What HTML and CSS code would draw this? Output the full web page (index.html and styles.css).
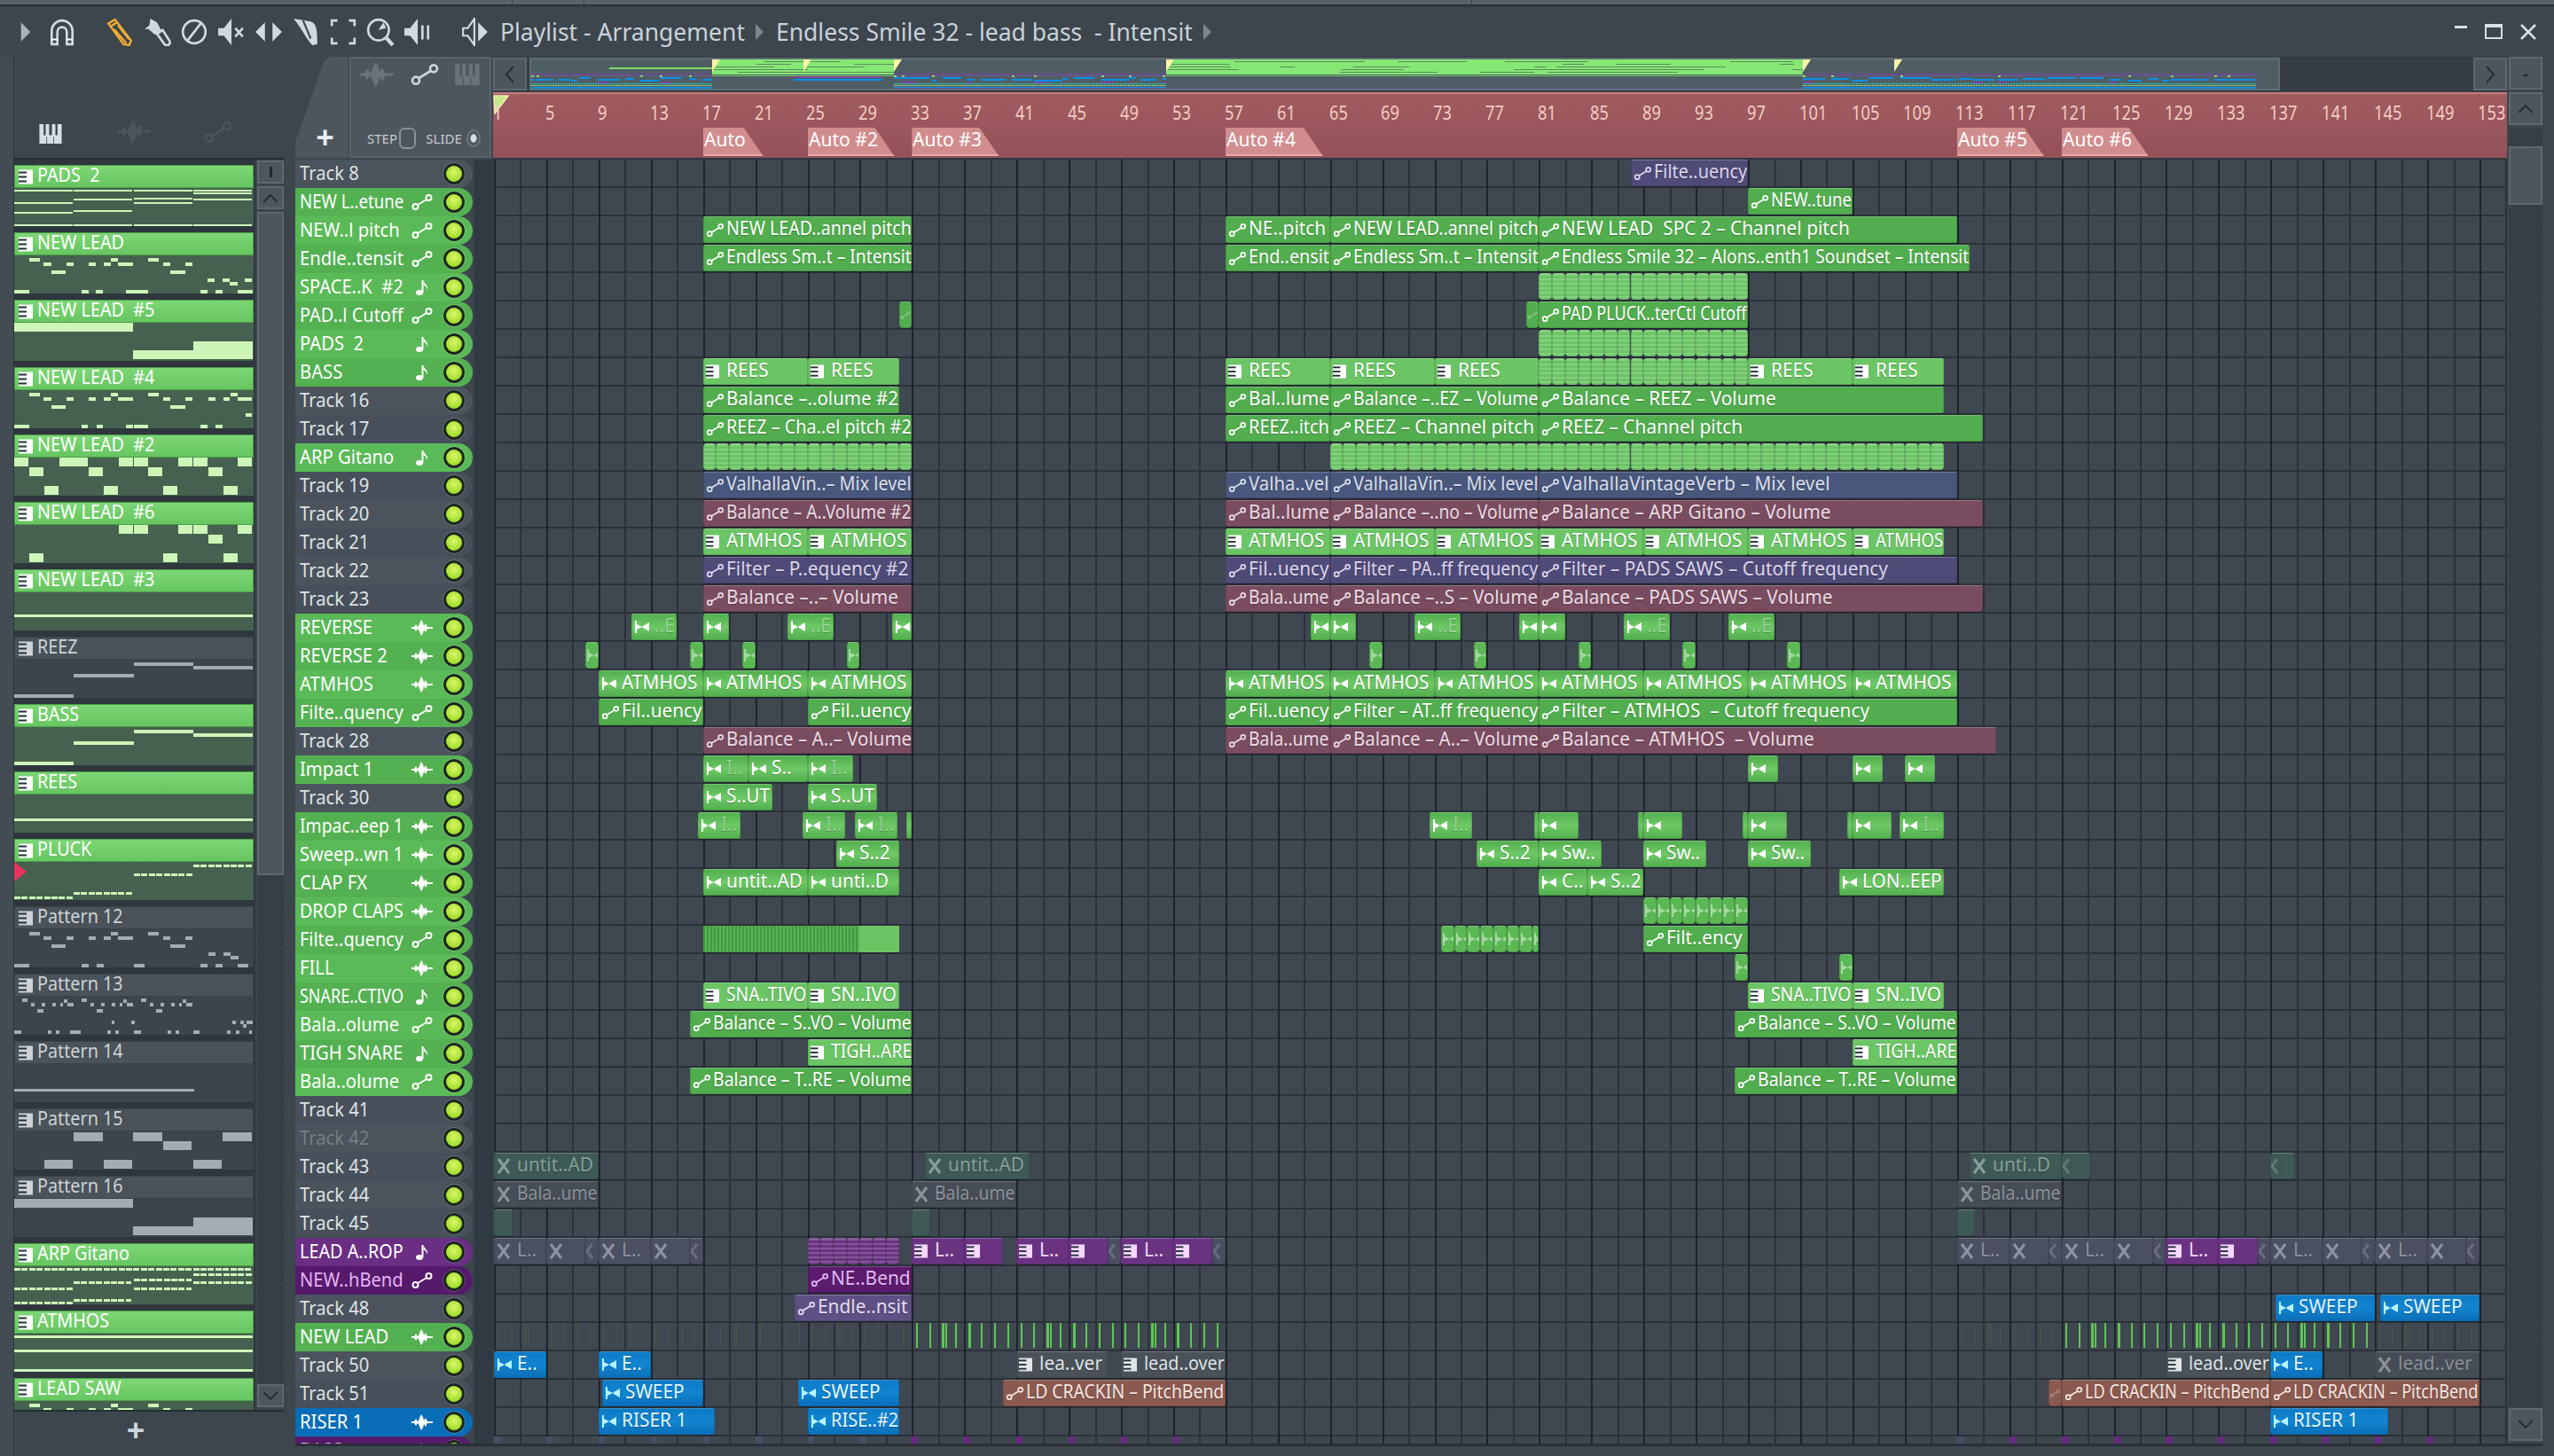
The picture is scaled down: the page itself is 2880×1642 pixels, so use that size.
FILE: index.html
```html
<!DOCTYPE html>
<html lang="en">
<head>
  <meta charset="UTF-8">
  <title>Playlist - Arrangement</title>
  <link rel="stylesheet" href="styles.css">
</head>
<body>
  <svg class="sprite" aria-hidden="true">
    <symbol id="i-auto" viewBox="0 0 24 18">
      <circle cx="4.5" cy="14" r="3" fill="none" stroke="currentColor" stroke-width="2"/>
      <circle cx="19.5" cy="4" r="3" fill="none" stroke="currentColor" stroke-width="2"/>
      <path d="M7 12 L17 6" stroke="currentColor" stroke-width="2"/>
    </symbol>
    <symbol id="i-note" viewBox="0 0 16 18">
      <ellipse cx="5" cy="15" rx="4" ry="3" fill="currentColor"/>
      <rect x="7.5" y="1" width="2" height="14" fill="currentColor"/>
      <path d="M9.5 1 C10 5 15 6 14 12 C13 8 11 7 9.5 6 Z" fill="currentColor"/>
    </symbol>
    <symbol id="i-wave" viewBox="0 0 24 18">
      <path d="M0 8 L3 8 L5 5 L7 8 L8 7 L10 2 L11 0 L13 3 L14 7 L16 4 L18 8 L24 8 L24 10 L18 10 L16 14 L14 11 L13 15 L11 18 L10 16 L8 11 L7 10 L5 13 L3 10 L0 10 Z" fill="currentColor"/>
    </symbol>
    <symbol id="i-pat" viewBox="0 0 16 16">
      <rect width="16" height="16" fill="currentColor"/>
      <rect x="0" y="2" width="9" height="2" fill="#26303a"/>
      <rect x="0" y="7" width="9" height="2" fill="#26303a"/>
      <rect x="0" y="12" width="9" height="2" fill="#26303a"/>
    </symbol>
    <symbol id="i-clip" viewBox="0 0 18 16">
      <path d="M1 1 L3 1 L3 5 L9 8 L3 11 L3 15 L1 15 Z M17 3 L17 13 L10 9 L9 8 L10 7 Z" fill="currentColor"/>
    </symbol>
    <symbol id="i-x" viewBox="0 0 16 18">
      <path d="M2 1 L14 17 M14 1 L2 17" fill="none" stroke="currentColor" stroke-width="3"/>
    </symbol>
    <symbol id="i-piano" viewBox="0 0 32 28">
      <path d="M0 0 H32 V28 H0 Z M6 0 V16 H9 V0 Z M14 0 V16 H18 V0 Z M23 0 V16 H26 V0 Z" fill="currentColor" fill-rule="evenodd"/>
      <path d="M10.500 18 V28 M20.500 18 V28" stroke="#3c444c" stroke-width="1"/>
    </symbol>
  </svg>

  <div class="topstrip"><span class="seam seam-a"></span><span class="seam seam-b"></span><span class="seam seam-c"></span></div>

  <header class="toolbar">
    <svg class="tool tool-arrow" viewBox="0 0 30 30"><path d="M10 5 L20 15 L10 25 Z" fill="#aab2b8"/></svg>
    <svg class="tool tool-wide" viewBox="0 0 30 30"><path d="M4 28 V14 A11 11 0 0 1 26 14 V28 H20 V15 A5 5 0 0 0 10 15 V28 Z" fill="none" stroke="#d2d9de" stroke-width="2.500"/><path d="M4 23 H10 M20 23 H26" stroke="#fff" stroke-width="2"/></svg>
    <svg class="tool" viewBox="0 0 30 30"><path d="M3 6 L10 2 L27 24 L25 29 L19 28 Z M6 9 L12 5 M9 12 L22 27 M13 8 L25 23" fill="none" stroke="#f0ab33" stroke-width="2.200"/></svg>
    <svg class="tool" viewBox="0 0 30 30"><path d="M8 1 L15 5 L20 14 L13 18 L6 12 L2 12 L7 8 Z" fill="#d2d9de"/><path d="M15 17 L21 13 L28 24 A3 3 0 0 1 23 28 Z" fill="none" stroke="#d2d9de" stroke-width="2.500"/></svg>
    <svg class="tool" viewBox="0 0 30 30"><circle cx="15" cy="15" r="12" fill="none" stroke="#d2d9de" stroke-width="2.500"/><path d="M8 24 L22 6" stroke="#d2d9de" stroke-width="2.500"/></svg>
    <svg class="tool" viewBox="0 0 30 30"><path d="M1 11 H7 L15 1 V29 L7 19 H1 Z" fill="#d2d9de"/><path d="M19 11 L27 20 M27 11 L19 20" stroke="#d2d9de" stroke-width="2.500"/></svg>
    <svg class="tool" viewBox="0 0 30 30"><path d="M11 5 V25 L1 15 Z M19 5 V25 L29 15 Z" fill="#d2d9de"/><path d="M15 3 V27" stroke="#3c444c" stroke-width="2"/></svg>
    <svg class="tool" viewBox="0 0 30 30"><path d="M2 1 L20 4 C27 6 27 16 27 28 L22 29 C16 24 13 15 2 1 Z" fill="#d2d9de"/><path d="M12 3 L20 22" stroke="#3c444c" stroke-width="2"/></svg>
    <svg class="tool" viewBox="0 0 30 30"><path d="M3 9 V3 H9 M21 3 H27 V9 M27 21 V27 H21 M9 27 H3 V21" fill="none" stroke="#d2d9de" stroke-width="2.500"/></svg>
    <svg class="tool" viewBox="0 0 30 30"><circle cx="13" cy="13" r="11" fill="none" stroke="#d2d9de" stroke-width="2.500"/><path d="M13 13 L18 5 L21 11 Z" fill="#d2d9de"/><path d="M21 21 L28 29" stroke="#d2d9de" stroke-width="4"/></svg>
    <svg class="tool tool-wide" viewBox="0 0 30 30"><path d="M1 11 H7 L15 1 V29 L7 19 H1 Z" fill="#d2d9de"/><path d="M20 8 V23 M26 8 V23" stroke="#d2d9de" stroke-width="2.500"/></svg>
    <svg class="tool" viewBox="0 0 30 30"><path d="M2 11 H7 L14 1 V29 L7 19 H2 Z" fill="none" stroke="#d2d9de" stroke-width="2"/><path d="M18 5 V25 L28 15 Z" fill="#d2d9de"/></svg>
    <div class="title">
      <span>Playlist - Arrangement</span><i class="crumb"></i><span>Endless Smile 32 - lead bass&nbsp; - Intensit</span><i class="crumb"></i>
    </div>
    <div class="winbtns">
      <span class="win-min"></span>
      <span class="win-max"></span>
      <svg class="win-close" viewBox="0 0 18 18"><path d="M1 1 L17 17 M17 1 L1 17" stroke="#d8dfe4" stroke-width="2.500"/></svg>
    </div>
  </header>

  <main class="main">
    <div class="edge"></div>

    <section class="picker">
      <div class="picker-tabs">
        <svg class="tab-piano"><use href="#i-piano"/></svg>
        <svg class="tab-wave"><use href="#i-wave"/></svg>
        <svg class="tab-auto"><use href="#i-auto"/></svg>
      </div>
      <div class="picker-body">
        <div class="clip-list" id="clipList"></div>
        <div class="vscroll vscroll-small">
          <div class="sb-btn sb-grip"><i></i></div>
          <div class="sb-btn"><svg viewBox="0 0 16 10"><path d="M1 9 L8 2 L15 9" fill="none" stroke="#20272e" stroke-width="1.500"/></svg></div>
          <div class="sb-thumb sb-thumb-long"></div>
          <div class="sb-track"></div>
          <div class="sb-btn"><svg viewBox="0 0 16 10"><path d="M1 1 L8 8 L15 1" fill="none" stroke="#20272e" stroke-width="1.500"/></svg></div>
        </div>
      </div>
      <div class="picker-add">+</div>
    </section>

    <section class="arrange">
      <div class="arr-left">
        <div class="arr-tabs">
          <div class="tab-plus">+</div>
          <div class="tab-panel">
            <div class="panel-icons">
              <svg class="pi-wave"><use href="#i-wave"/></svg>
              <svg class="pi-auto"><use href="#i-auto"/></svg>
              <svg class="pi-piano"><use href="#i-piano"/></svg>
            </div>
            <div class="panel-mode">
              <span>STEP</span><i class="mode-step"></i><span class="mode-slide">SLIDE</span><i class="mode-radio"></i>
            </div>
          </div>
        </div>
        <div class="track-col" id="tracks"></div>
      </div>

      <div class="arr-mid">
        <div class="overview-row">
          <div class="nav-btn"><svg viewBox="0 0 12 20"><path d="M10 1 L2 10 L10 19" fill="none" stroke="#1f262d" stroke-width="1.800"/></svg></div>
          <div class="overview" id="overview"></div>
          <div class="overview-rest"></div>
          <div class="nav-btn"><svg viewBox="0 0 12 20"><path d="M2 1 L10 10 L2 19" fill="none" stroke="#1f262d" stroke-width="1.800"/></svg></div>
        </div>
        <div class="ruler" id="ruler">
          <svg class="playhead" viewBox="0 0 18 22"><path d="M1 1 H17 L2 21 Z" fill="#c8e98c" stroke="#f2eeb0" stroke-width="1.500"/></svg>
        </div>
        <div class="lanes" id="lanes"></div>
      </div>

      <div class="vscroll vscroll-main">
        <div class="sb-btn sb-mini">-</div>
        <div class="sb-btn"><svg viewBox="0 0 16 10"><path d="M1 9 L8 2 L15 9" fill="none" stroke="#20272e" stroke-width="1.500"/></svg></div>
        <div class="sb-track sb-track-short"></div>
        <div class="sb-thumb"></div>
        <div class="sb-track"></div>
        <div class="sb-btn"><svg viewBox="0 0 16 10"><path d="M1 1 L8 8 L15 1" fill="none" stroke="#20272e" stroke-width="1.500"/></svg></div>
      </div>
    </section>
  </main>

  <script src="script.js"></script>
</body>
</html>
```

FILE: styles.css
```css
html, body {
  margin: 0;
  padding: 0;
}
body {
  width: 2880px;
  height: 1642px;
  overflow: hidden;
  background: #3d454d;
  font-family: "Noto Sans", "Open Sans", sans-serif;
  font-size: 21.5px;
  color: #fff;
}
.sprite {
  width: 0;
  height: 0;
  position: absolute;
}
/* the app font is a tall narrow one, closest we get is Noto squeezed */
.squeeze {
  display: inline-block;
  transform: scaleX(0.92);
  transform-origin: left center;
}

/* top */
.topstrip {
  height: 5px;
  background: #5a626a;
  border-bottom: 2px solid #2a3037;
  display: flex;
}
.seam {
  width: 1px;
  background: #3a4149;
}
.seam-a { margin-left: 577px; }
.seam-b { margin-left: 80px; }
.seam-c { margin-left: 1000px; }

.toolbar {
  height: 57px;
  display: flex;
  align-items: center;
  padding-left: 13px;
  box-sizing: border-box;
}
.tool {
  width: 32px;
  height: 32px;
  margin-right: 10px;
  flex: none;
}
.tool-arrow { margin-right: 9px; }
.tool-wide { margin-right: 33px; }
.title {
  display: flex;
  align-items: center;
  font-size: 26.5px;
  color: #c9d3da;
  margin-left: 2px;
}
.crumb {
  width: 0;
  height: 0;
  margin: 0 14px 0 12px;
  border-left: 9px solid #7d868d;
  border-top: 9px solid transparent;
  border-bottom: 9px solid transparent;
}
.winbtns {
  margin-left: auto;
  display: flex;
  align-items: center;
  gap: 20px;
  padding-right: 20px;
}
.win-min {
  width: 14px;
  height: 3px;
  background: #d8dfe4;
  margin-bottom: 10px;
}
.win-max {
  width: 16px;
  height: 11px;
  border: 2px solid #d8dfe4;
  border-top-width: 4px;
}
.win-close {
  width: 18px;
  height: 18px;
}

.main {
  display: flex;
  height: 1578px;
}
.edge {
  width: 15px;
  border-right: 1px solid #2f363d;
  background: #434b53;
}

/* picker */
.picker {
  width: 304px;
  display: flex;
  flex-direction: column;
}
.picker-tabs {
  height: 114px;
  display: flex;
  align-items: flex-end;
  padding-bottom: 16px;
  box-sizing: border-box;
  color: #d8dfe4;
}
.tab-piano {
  width: 32px;
  height: 22px;
  margin-left: 25px;
}
.tab-wave {
  width: 42px;
  height: 28px;
  margin-left: 57px;
  color: #4c545c;
}
.tab-auto {
  width: 32px;
  height: 26px;
  margin-left: 58px;
  color: #4c545c;
}
.picker-body {
  height: 1410px;
  display: flex;
  border-top: 2px solid #262c32;
  border-bottom: 2px solid #262c32;
  box-sizing: content-box;
}
.clip-list {
  width: 274px;
  background: #2f363d;
  overflow: hidden;
  padding-top: 6px;
  box-sizing: border-box;
}
.pick {
  height: 76px;
  width: 270px;
}
.pick-head {
  height: 26px;
  display: flex;
  align-items: center;
  gap: 5px;
  padding-left: 4px;
  box-sizing: border-box;
  background: linear-gradient(#7dd676, #66c660);
  border: 1px solid #4c9e48;
  color: #fff;
  line-height: 24px;
}
.pick-head svg {
  width: 16px;
  height: 17px;
  flex: none;
}
.pick-name {
  position: relative;
  top: -2px;
}
.pick-body {
  position: relative;
  height: 43px;
  background: #46614f;
}
.pick-off .pick-head {
  background: #4a525a;
  border-color: #3a4149;
  color: #ccd2d6;
}
.pick-off .pick-body {
  background: #3c444c;
}
.note {
  position: absolute;
  background: #cdf5b8;
}
.pick-off .note {
  background: #a3acb2;
}
.pick-marker {
  position: absolute;
  left: 0;
  top: 0;
  width: 0;
  height: 0;
  border-left: 14px solid #e8355c;
  border-top: 11px solid transparent;
  border-bottom: 11px solid transparent;
}

.vscroll {
  display: flex;
  flex-direction: column;
}
.vscroll-small {
  width: 30px;
  margin-left: 2px;
  padding-top: 1px;
  box-sizing: border-box;
}
.vscroll-main {
  width: 38px;
  margin-left: 2px;
  height: 1564px;
}
.sb-btn {
  height: 37px;
  flex: none;
  background: #4d555d;
  border: 2px solid #5f676f;
  box-sizing: border-box;
  display: flex;
  align-items: center;
  justify-content: center;
  margin-bottom: 3px;
  color: #20272e;
  font-size: 18px;
  font-weight: 700;
}
.sb-btn svg {
  width: 18px;
  height: 11px;
}
.vscroll-small .sb-btn {
  height: 26px;
  margin-bottom: 3px;
}
.sb-grip i {
  width: 3px;
  height: 12px;
  background: #20272e;
}
.sb-thumb {
  height: 66px;
  flex: none;
  background: #4d555d;
  border: 2px solid #5f676f;
  box-sizing: border-box;
}
.sb-thumb-long {
  height: 748px;
}
.sb-track {
  flex: 1;
  background: repeating-linear-gradient(45deg, #343b42 0 2px, #3a4149 2px 4px);
}
.sb-track-short {
  flex: none;
  height: 21px;
}
.picker-add {
  height: 50px;
  line-height: 42px;
  text-align: center;
  font-size: 36px;
  font-weight: 700;
  color: #cfd6db;
  padding-right: 30px;
}

/* arrange */
.arrange {
  display: flex;
  margin-left: 13px;
  height: 1564px;
  border-bottom: 3px solid #2a3037;
  box-sizing: content-box;
}
.arr-left {
  width: 223px;
  flex: none;
}
.arr-tabs {
  height: 116px;
  display: flex;
  box-sizing: border-box;
  padding-bottom: 2px;
  gap: 1px;
  background: #3d454d;
}
.tab-plus {
  width: 60px;
  clip-path: polygon(38px 0, 100% 0, 100% 100%, 0 100%, 0 96px, 32px 6px);
  background: #4d555d;
  display: flex;
  align-items: flex-end;
  justify-content: center;
  font-size: 36px;
  font-weight: 700;
  line-height: 46px;
  color: #e8edf0;
  padding-left: 7px;
  box-sizing: border-box;
}
.tab-panel {
  width: 160px;
  background: #4d555d;
  border: 2px solid #5a626a;
  box-sizing: border-box;
  display: flex;
  flex-direction: column;
  justify-content: space-between;
}
.panel-icons {
  display: flex;
  align-items: center;
  justify-content: space-between;
  padding: 4px 10px 0 8px;
  color: #6b737a;
}
.pi-wave { width: 42px; height: 28px; }
.pi-auto { width: 32px; height: 26px; color: #cfd6db; }
.pi-piano { width: 30px; height: 24px; }
.panel-mode {
  display: flex;
  align-items: center;
  font-size: 15px;
  color: #c5ccd1;
  padding: 0 10px 8px 18px;
}
.mode-step {
  width: 20px;
  height: 20px;
  border: 2px solid #8b9298;
  border-radius: 6px;
  margin-left: 2px;
}
.mode-slide {
  margin-left: 11px;
}
.mode-radio {
  width: 16px;
  height: 16px;
  border: 2px solid #6d757c;
  border-radius: 50%;
  margin-left: 5px;
  background: radial-gradient(#d8dfe4 0 3px, transparent 4px);
}
.track-col {
  width: 223px;
  height: 1448px;
  overflow: hidden;
  background: linear-gradient(90deg, #3d454d 200px, #2f3a42 203px);
}
.track {
  width: 200px;
  height: 32px;
  display: flex;
  align-items: center;
  box-sizing: border-box;
  padding-left: 5px;
  border-radius: 0 16px 16px 0;
  background: #4b535c;
  color: #dde3e6;
  white-space: nowrap;
}
.track:nth-child(even) {
  background: #47505a;
}
.tr-green { background: #5bba58; color: #fff; }
.track.tr-green:nth-child(even) { background: #54b152; }
.tr-purple, .track.tr-purple:nth-child(even) { background: #6a2f84; color: #fff; }
.tr-dark, .track.tr-dark:nth-child(even) { background: #561a6c; color: #e4b4f4; }
.tr-blue, .track.tr-blue:nth-child(even) { background: #0a6db8; color: #fff; }
.tr-dim { color: #767e85; }
.tr-name {
  flex: 1;
  min-width: 0;
  position: relative;
  top: -2px;
}
.tr-icon {
  width: 24px;
  height: 18px;
  margin: 0 12px 0 2px;
  flex: none;
  color: #fff;
}
.tr-icon.note-ico {
  width: 16px;
  height: 18px;
  margin: 0 16px 0 6px;
}
.led {
  width: 24px;
  height: 24px;
  flex: none;
  margin-right: 9px;
  border-radius: 50%;
  box-sizing: border-box;
  border: 3px solid #1d2620;
  outline: 1px solid rgba(255, 255, 255, 0.18);
  background: radial-gradient(circle at 50% 40%, #dcf56a, #a4e030 65%, #7ab820);
}

.arr-mid {
  width: 2271px;
  flex: none;
}
.overview-row {
  height: 40px;
  display: flex;
  background: #353c43;
  padding-top: 1px;
  box-sizing: border-box;
}
.nav-btn {
  width: 38px;
  height: 37px;
  flex: none;
  background: #4d555d;
  border: 2px solid #5f676f;
  box-sizing: border-box;
  display: flex;
  align-items: center;
  justify-content: center;
}
.nav-btn svg {
  width: 12px;
  height: 20px;
}
.overview {
  position: relative;
  width: 1974px;
  height: 37px;
  margin-left: 3px;
  flex: none;
  background: #4f5e65;
  border: 2px solid #5f6c73;
  box-sizing: border-box;
  overflow: hidden;
}
.overview-rest {
  flex: 1;
}
.ov {
  position: absolute;
}
.ov-flag {
  position: absolute;
  top: 0;
  width: 0;
  height: 0;
  border-top: 14px solid #fdf3a8;
  border-right: 9px solid transparent;
}
.ruler {
  position: relative;
  height: 76px;
  width: 2271px;
  overflow: hidden;
  display: flex;
  align-items: flex-start;
  box-sizing: border-box;
  background: linear-gradient(#a15c60, #94515a);
  border-top: 2px solid #c47c7c;
  border-bottom: 2px solid #2f363d;
  color: #f4ccc4;
}
.bar-num {
  width: 58.92px;
  flex: none;
  line-height: 42px;
}
.bar-num .squeeze {
  transform: scaleX(0.85);
}
.playhead {
  position: absolute;
  left: 0;
  top: 1px;
  width: 18px;
  height: 22px;
}
.marker {
  position: absolute;
  top: 38px;
  height: 32px;
  background: #d18d8e;
  color: #fff;
  line-height: 26px;
  padding-left: 1px;
  box-sizing: border-box;
  border-bottom: 2px solid #e4a8a6;
  clip-path: polygon(0 0, calc(100% - 22px) 0, 100% 100%, 0 100%);
}
.marker .squeeze {
  transform: scaleX(0.98);
}
.lanes {
  position: relative;
  width: 2270px;
  height: 1448px;
  margin-left: 1px;
  overflow: hidden;
  background-color: #3f4750;
  background-image:
    repeating-linear-gradient(90deg, #1d242b 0 2px, transparent 2px 58.92px),
    repeating-linear-gradient(90deg, #2a3138 0 2px, transparent 2px 29.46px),
    repeating-linear-gradient(180deg, transparent 0 30px, #2b3239 30px 32px);
}

/* clips */
.clip {
  position: absolute;
  height: 30px;
  display: flex;
  align-items: center;
  box-sizing: border-box;
  white-space: nowrap;
  border-radius: 2px;
  border: 1px solid rgba(0, 0, 0, 0.12);
  border-top-color: rgba(255, 255, 255, 0.22);
  box-shadow: 0 1px 0 #1d242b;
  padding-left: 2px;
  text-shadow: 0 1px 1px rgba(0, 0, 0, 0.25);
  line-height: 28px;
}
.clip svg {
  flex: none;
  width: 21px;
  height: 15px;
  margin-right: 2px;
}
.clip .ic-pat {
  width: 15px;
  height: 16px;
  margin-right: 8px;
}
.clip .ic-clip {
  width: 18px;
  height: 16px;
  margin-right: 5px;
}
.clip .ic-x {
  width: 16px;
  height: 18px;
  margin-right: 7px;
}
.clip span {
  position: relative;
  top: -2px;
  flex: none;
}
.c-green { background: #51ad4e; }
.c-pat { background-color: #6bc565; }
.c-wave { background-color: #5bb855; background-image: linear-gradient(#53b04f, #6ec866 50%, #53b04f); }
.c-maroon { background: #7a4c60; color: #eadde4; }
.c-violet { background: #4f4b78; color: #dcd6ee; }
.c-slate { background: #49577c; color: #d9dfec; }
.c-dark { background: #5b1c6e; color: #e4b8f4; }
.c-plum { background-color: #6a3382; color: #f5d8ff; }
.c-mauve { background: #5e5084; color: #e4def4; }
.c-blue { background: linear-gradient(#0d7cc8, #1284d0 50%, #0a6fb8); color: #e2f6ff; }
.c-blue .ic-clip { color: #b8f6ff; }
.c-brown { background-color: #8a5a50; color: #f6e6e0; }
.c-gray { background: #4a5158; color: #dfe5e8; }
.c-gg { background-color: #3e5a56; color: #84a09a; }
.c-gs { background: #474e60; color: #8c93a2; }
.c-gz { background: #464d57; color: #8a929a; }
.c-gp { background-color: #4a4f62; color: #8c93a2; }
.c-stale { color: #97d292; }
.tiny {
  padding-left: 0;
  overflow: hidden;
  background-image: repeating-linear-gradient(180deg, rgba(255, 255, 255, 0.18) 0 2px, transparent 2px 5px);
  border-radius: 4px;
}
.tiny-wave {
  background-image: none;
}
.tiny svg {
  opacity: 0.45;
  margin-left: 0;
  width: 12px;
}
.tiny-wave .ic-x {
  margin-left: -7px;
}
.stripes {
  border: none;
  border-radius: 0;
  padding: 0;
}
.stripes-dense {
  background-image: repeating-linear-gradient(90deg, #3f9a40 0 2px, #58b254 2px 4px);
}
.tick {
  position: absolute;
  width: 2px;
  height: 28px;
  background: #5ec654;
}
.tick-dim {
  background: #434f4d;
}
.purple-tick {
  position: absolute;
  top: 2px;
  width: 7px;
  height: 8px;
  background: #6a2a84;
}
.purple-tick.dim {
  background: #4a4f66;
}
```

FILE: script.js
```js
const BAR = 14.73;
const ROW = 32;

const tracks = [
  ['Track 8', 'plain'], ['NEW L..etune', 'green', 'auto'], ['NEW..l pitch', 'green', 'auto'],
  ['Endle..tensit', 'green', 'auto'], ['SPACE..K  #2', 'green', 'note'], ['PAD..l Cutoff', 'green', 'auto'],
  ['PADS  2', 'green', 'note'], ['BASS', 'green', 'note'], ['Track 16', 'plain'], ['Track 17', 'plain'],
  ['ARP Gitano', 'green', 'note'], ['Track 19', 'plain'], ['Track 20', 'plain'], ['Track 21', 'plain'],
  ['Track 22', 'plain'], ['Track 23', 'plain'], ['REVERSE', 'green', 'wave'], ['REVERSE 2', 'green', 'wave'],
  ['ATMHOS', 'green', 'wave'], ['Filte..quency', 'green', 'auto'], ['Track 28', 'plain'],
  ['Impact 1', 'green', 'wave'], ['Track 30', 'plain'], ['Impac..eep 1', 'green', 'wave'],
  ['Sweep..wn 1', 'green', 'wave'], ['CLAP FX', 'green', 'wave'], ['DROP CLAPS', 'green', 'wave'],
  ['Filte..quency', 'green', 'auto'], ['FILL', 'green', 'wave'], ['SNARE..CTIVO', 'green', 'note'],
  ['Bala..olume', 'green', 'auto'], ['TIGH SNARE', 'green', 'note'], ['Bala..olume', 'green', 'auto'],
  ['Track 41', 'plain'], ['Track 42', 'dim'], ['Track 43', 'plain'], ['Track 44', 'plain'], ['Track 45', 'plain'],
  ['LEAD A..ROP', 'purple', 'note'], ['NEW..hBend', 'dark', 'auto'], ['Track 48', 'plain'],
  ['NEW LEAD', 'green', 'wave'], ['Track 50', 'plain'], ['Track 51', 'plain'], ['RISER 1', 'blue', 'wave'],
  ['BASS', 'dark', 'wave']
];

// row, start bar, end bar, icon, colour, label
const clips = [
  [0, 88, 97, 'auto', 'violet', 'Filte..uency'],
  [1, 97, 105, 'auto', 'green', 'NEW..tune'],
  [2, 17, 33, 'auto', 'green', 'NEW LEAD..annel pitch'],
  [2, 57, 65, 'auto', 'green', 'NE..pitch'],
  [2, 65, 81, 'auto', 'green', 'NEW LEAD..annel pitch'],
  [2, 81, 113, 'auto', 'green', 'NEW LEAD  SPC 2 – Channel pitch'],
  [3, 17, 33, 'auto', 'green', 'Endless Sm..t – Intensit'],
  [3, 57, 65, 'auto', 'green', 'End..ensit'],
  [3, 65, 81, 'auto', 'green', 'Endless Sm..t – Intensit'],
  [3, 81, 114, 'auto', 'green', 'Endless Smile 32 – Alons..enth1 Soundset – Intensit'],
  [5, 32, 33, 'tinyauto', 'green'],
  [5, 80, 81, 'tinyauto', 'green'],
  [5, 81, 97, 'auto', 'green', 'PAD PLUCK..terCtl Cutoff'],
  [7, 17, 25, 'pat', 'pat', 'REES'], [7, 25, 32, 'pat', 'pat', 'REES'],
  [7, 57, 65, 'pat', 'pat', 'REES'], [7, 65, 73, 'pat', 'pat', 'REES'], [7, 73, 81, 'pat', 'pat', 'REES'],
  [7, 97, 105, 'pat', 'pat', 'REES'], [7, 105, 112, 'pat', 'pat', 'REES'],
  [8, 17, 32, 'auto', 'green', 'Balance –..olume #2'],
  [8, 57, 65, 'auto', 'green', 'Bal..lume'],
  [8, 65, 81, 'auto', 'green', 'Balance –..EZ – Volume'],
  [8, 81, 112, 'auto', 'green', 'Balance – REEZ – Volume'],
  [9, 17, 33, 'auto', 'green', 'REEZ – Cha..el pitch #2'],
  [9, 57, 65, 'auto', 'green', 'REEZ..itch'],
  [9, 65, 81, 'auto', 'green', 'REEZ – Channel pitch'],
  [9, 81, 115, 'auto', 'green', 'REEZ – Channel pitch'],
  [11, 17, 33, 'auto', 'slate', 'ValhallaVin..– Mix level'],
  [11, 57, 65, 'auto', 'slate', 'Valha..vel'],
  [11, 65, 81, 'auto', 'slate', 'ValhallaVin..– Mix level'],
  [11, 81, 113, 'auto', 'slate', 'ValhallaVintageVerb – Mix level'],
  [12, 17, 33, 'auto', 'maroon', 'Balance – A..Volume #2'],
  [12, 57, 65, 'auto', 'maroon', 'Bal..lume'],
  [12, 65, 81, 'auto', 'maroon', 'Balance –..no – Volume'],
  [12, 81, 115, 'auto', 'maroon', 'Balance – ARP Gitano – Volume'],
  [13, 17, 25, 'pat', 'pat', 'ATMHOS'], [13, 25, 33, 'pat', 'pat', 'ATMHOS'],
  [13, 57, 65, 'pat', 'pat', 'ATMHOS'], [13, 65, 73, 'pat', 'pat', 'ATMHOS'], [13, 73, 81, 'pat', 'pat', 'ATMHOS'],
  [13, 81, 89, 'pat', 'pat', 'ATMHOS'], [13, 89, 97, 'pat', 'pat', 'ATMHOS'], [13, 97, 105, 'pat', 'pat', 'ATMHOS'],
  [13, 105, 112, 'pat', 'pat', 'ATMHOS'],
  [14, 17, 33, 'auto', 'violet', 'Filter – P..equency #2'],
  [14, 57, 65, 'auto', 'violet', 'Fil..uency'],
  [14, 65, 81, 'auto', 'violet', 'Filter – PA..ff frequency'],
  [14, 81, 113, 'auto', 'violet', 'Filter – PADS SAWS – Cutoff frequency'],
  [15, 17, 33, 'auto', 'maroon', 'Balance –..– Volume'],
  [15, 57, 65, 'auto', 'maroon', 'Bala..ume'],
  [15, 65, 81, 'auto', 'maroon', 'Balance –..S – Volume'],
  [15, 81, 115, 'auto', 'maroon', 'Balance – PADS SAWS – Volume'],
  [16, 11.5, 15, 'clip', 'wave', '..E', 'stale'], [16, 17, 19, 'clip', 'wave'], [16, 23.5, 27, 'clip', 'wave', '..E', 'stale'],
  [16, 31.5, 33, 'clip', 'wave'], [16, 63.5, 65, 'clip', 'wave'], [16, 65, 67, 'clip', 'wave'],
  [16, 71.5, 75, 'clip', 'wave', '..E', 'stale'], [16, 79.5, 81, 'clip', 'wave'], [16, 81, 83, 'clip', 'wave'],
  [16, 87.5, 91, 'clip', 'wave', '..E', 'stale'], [16, 95.5, 99, 'clip', 'wave', '..E', 'stale'],
  [18, 9, 17, 'clip', 'wave', 'ATMHOS'], [18, 17, 25, 'clip', 'wave', 'ATMHOS'], [18, 25, 33, 'clip', 'wave', 'ATMHOS'],
  [18, 57, 65, 'clip', 'wave', 'ATMHOS'], [18, 65, 73, 'clip', 'wave', 'ATMHOS'], [18, 73, 81, 'clip', 'wave', 'ATMHOS'],
  [18, 81, 89, 'clip', 'wave', 'ATMHOS'], [18, 89, 97, 'clip', 'wave', 'ATMHOS'], [18, 97, 105, 'clip', 'wave', 'ATMHOS'],
  [18, 105, 113, 'clip', 'wave', 'ATMHOS'],
  [19, 9, 17, 'auto', 'green', 'Fil..uency'], [19, 25, 33, 'auto', 'green', 'Fil..uency'],
  [19, 57, 65, 'auto', 'green', 'Fil..uency'],
  [19, 65, 81, 'auto', 'green', 'Filter – AT..ff frequency'],
  [19, 81, 113, 'auto', 'green', 'Filter – ATMHOS  – Cutoff frequency'],
  [20, 17, 33, 'auto', 'maroon', 'Balance – A..– Volume'],
  [20, 57, 65, 'auto', 'maroon', 'Bala..ume'],
  [20, 65, 81, 'auto', 'maroon', 'Balance – A..– Volume'],
  [20, 81, 116, 'auto', 'maroon', 'Balance – ATMHOS  – Volume'],
  [21, 17, 20.5, 'clip', 'wave', 'I..', 'stale'], [21, 20.5, 25, 'clip', 'wave', 'S..'], [21, 25, 28.5, 'clip', 'wave', 'I..', 'stale'],
  [21, 97, 99.3, 'clip', 'wave'], [21, 105, 107.3, 'clip', 'wave'], [21, 109, 111.3, 'clip', 'wave'],
  [22, 17, 22.3, 'clip', 'wave', 'S..UT'], [22, 25, 30.3, 'clip', 'wave', 'S..UT'],
  [23, 16.6, 19.9, 'clip', 'wave', 'I..', 'stale'], [23, 24.6, 27.9, 'clip', 'wave', 'I..', 'stale'], [23, 28.6, 31.9, 'clip', 'wave', 'I..', 'stale'],
  [23, 32.6, 33, 'bare', 'wave'], [23, 72.6, 75.9, 'clip', 'wave', 'I..', 'stale'], [23, 80.6, 81, 'bare', 'wave'],
  [23, 81, 84, 'clip', 'wave'], [23, 88.6, 89, 'bare', 'wave'], [23, 89, 92, 'clip', 'wave'],
  [23, 96.6, 97, 'bare', 'wave'], [23, 97, 100, 'clip', 'wave'], [23, 104.6, 105, 'bare', 'wave'],
  [23, 105, 108, 'clip', 'wave'], [23, 108.6, 112, 'clip', 'wave', 'I..', 'stale'],
  [24, 27.2, 32, 'clip', 'wave', 'S..2'], [24, 76.2, 81, 'clip', 'wave', 'S..2'], [24, 81, 85.8, 'clip', 'wave', 'Sw..'],
  [24, 89, 93.8, 'clip', 'wave', 'Sw..'], [24, 97, 101.8, 'clip', 'wave', 'Sw..'],
  [25, 17, 25, 'clip', 'wave', 'untit..AD'], [25, 25, 32, 'clip', 'wave', 'unti..D'],
  [25, 81, 84.7, 'clip', 'wave', 'C..'], [25, 84.7, 89, 'clip', 'wave', 'S..2'], [25, 104, 112, 'clip', 'wave', 'LON..EEP'],
  [27, 89, 97, 'auto', 'green', 'Filt..ency'],
  [29, 17, 25, 'pat', 'pat', 'SNA..TIVO'], [29, 25, 32, 'pat', 'pat', 'SN..IVO'],
  [29, 97, 105, 'pat', 'pat', 'SNA..TIVO'], [29, 105, 112, 'pat', 'pat', 'SN..IVO'],
  [30, 16, 33, 'auto', 'green', 'Balance – S..VO – Volume'], [30, 96, 113, 'auto', 'green', 'Balance – S..VO – Volume'],
  [31, 25, 33, 'pat', 'pat', 'TIGH..ARE'], [31, 105, 113, 'pat', 'pat', 'TIGH..ARE'],
  [32, 16, 33, 'auto', 'green', 'Balance – T..RE – Volume'], [32, 96, 113, 'auto', 'green', 'Balance – T..RE – Volume'],
  [35, 1, 9, 'x', 'gg', 'untit..AD'], [35, 34, 42, 'x', 'gg', 'untit..AD'], [35, 114, 121, 'x', 'gg', 'unti..D'],
  [35, 121, 123.2, 'tinyx', 'gg'], [35, 137, 138.9, 'tinyx', 'gg'],
  [36, 1, 9, 'x', 'gz', 'Bala..ume'], [36, 33, 41, 'x', 'gz', 'Bala..ume'], [36, 113, 121, 'x', 'gz', 'Bala..ume'],
  [37, 1, 2.4, 'bare', 'gg'], [37, 33, 34.4, 'bare', 'gg'], [37, 113, 114.4, 'bare', 'gg'],
  [39, 25, 33, 'auto', 'dark', 'NE..Bend'],
  [40, 24, 33, 'auto', 'mauve', 'Endle..nsit'],
  [40, 137.4, 145, 'clip', 'blue', 'SWEEP'], [40, 145.4, 153, 'clip', 'blue', 'SWEEP'],
  [42, 1, 5, 'clip', 'blue', 'E..'], [42, 9, 13, 'clip', 'blue', 'E..'],
  [42, 41, 48, 'pat', 'gray', 'lea..ver'], [42, 49, 57, 'pat', 'gray', 'lead..over'],
  [42, 129, 137, 'pat', 'gray', 'lead..over'], [42, 137, 141, 'clip', 'blue', 'E..'], [42, 145, 153, 'x', 'gz', 'lead..ver'],
  [43, 9.3, 17, 'clip', 'blue', 'SWEEP'], [43, 24.3, 32, 'clip', 'blue', 'SWEEP'],
  [43, 40, 57, 'auto', 'brown', 'LD CRACKIN – PitchBend'], [43, 120, 121, 'tinyauto', 'brown'],
  [43, 121, 137, 'auto', 'brown', 'LD CRACKIN – PitchBend'], [43, 137, 153, 'auto', 'brown', 'LD CRACKIN – PitchBend'],
  [44, 9, 17.9, 'clip', 'blue', 'RISER 1'], [44, 25, 32, 'clip', 'blue', 'RISE..#2'], [44, 137, 146, 'clip', 'blue', 'RISER 1']
];

function tinies(row, from, to, kind) {
  for (let b = from; b < to; b++) clips.push([row, b, Math.min(b + 1, to), kind, kind === 'tinyclip' ? 'wave' : 'pat']);
}
tinies(4, 81, 97, 'tinypat');
tinies(6, 81, 97, 'tinypat');
tinies(7, 81, 97, 'tinypat');
tinies(10, 17, 33, 'tinypat');
tinies(10, 65, 112, 'tinypat');
[8, 16, 20, 28, 68, 76, 84, 92, 100].forEach(b => clips.push([17, b, b + 1, 'tinyclip', 'wave']));
tinies(26, 89, 97, 'tinyclip');
tinies(27, 73.5, 81, 'tinyclip');
[96, 104].forEach(b => clips.push([28, b, b + 1, 'tinyclip', 'wave']));
tinies(38, 25, 32, 'tinypurple');

// LEAD A..ROP blocks repeat every 8 bars: long, short, stub
function leadBlock(s, colour) {
  const icon = colour === 'plum' ? 'pat' : 'x';
  clips.push([38, s, s + 4, icon, colour, 'L..']);
  clips.push([38, s + 4, s + 7, icon, colour]);
  if (colour !== 'plum') clips.push([38, s + 7, s + 8, 'tinyx', colour]);
}
[1, 9, 113, 121, 137, 145].forEach(s => leadBlock(s, 'gp'));
[33, 41, 49, 129].forEach(s => leadBlock(s, 'plum'));
[[48, 49], [56, 57], [136, 137]].forEach(r => clips.push([38, r[0], r[1], 'tinyx', 'gp']));

const icons = {
  auto: '<svg><use href="#i-auto"/></svg>',
  pat: '<svg class="ic-pat"><use href="#i-pat"/></svg>',
  clip: '<svg class="ic-clip"><use href="#i-clip"/></svg>',
  x: '<svg class="ic-x"><use href="#i-x"/></svg>'
};

const barX = bar => (bar - 1) * BAR;
const nbsp = s => s.replace(/  /g, ' &nbsp;');

// the app squeezes a name that would not fit its box
function fit(span, room, base) {
  const scale = Math.min(base, room / span.offsetWidth);
  span.style.transform = `scaleX(${scale.toFixed(3)})`;
}

// tracks
const trackCol = document.getElementById('tracks');
tracks.forEach(t => {
  const row = document.createElement('div');
  row.className = 'track tr-' + t[1];
  let html = `<span class="tr-name"><span class="squeeze">${nbsp(t[0])}</span></span>`;
  if (t[2]) {
    const cls = t[2] === 'note' ? 'tr-icon note-ico' : 'tr-icon';
    html += `<svg class="${cls}"><use href="#i-${t[2]}"/></svg>`;
  }
  row.innerHTML = html + '<i class="led"></i>';
  trackCol.appendChild(row);
  fit(row.querySelector('.squeeze'), t[2] ? 117 : 160, 0.94);
});

// clips
const lanes = document.getElementById('lanes');
clips.forEach(c => {
  const [row, start, end, kind, colour, label, stale] = c;
  const el = document.createElement('div');
  let iconKey = kind;
  let cls = 'clip c-' + colour;
  if (kind.startsWith('tiny')) {
    cls += ' tiny';
    iconKey = kind.slice(4);
    if (iconKey === 'purple') {
      cls = 'clip tiny c-plum';
      iconKey = '';
    } else if (iconKey === 'pat') {
      iconKey = '';
    } else {
      cls += ' tiny-wave';
    }
  }
  if (kind === 'bare') iconKey = '';
  el.className = cls;
  el.style.left = barX(start) + 'px';
  el.style.top = row * ROW + 'px';
  el.style.width = (end - start) * BAR + 'px';
  let html = icons[iconKey] || '';
  if (label) {
    html += `<span class="squeeze${stale ? ' c-stale' : ''}">${nbsp(label)}</span>`;
  }
  el.innerHTML = html;
  lanes.appendChild(el);
  if (label) {
    const span = el.querySelector('.squeeze');
    fit(span, (end - start) * BAR - 27, 0.97);
  }
});

// fast-cut stripes in the second Filte..quency lane
[[17, 29, ' stripes-dense'], [29, 32, '']].forEach(s => {
  const el = document.createElement('div');
  el.className = 'clip c-pat stripes' + s[2];
  el.style.left = barX(s[0]) + 'px';
  el.style.top = 27 * ROW + 'px';
  el.style.width = (s[1] - s[0]) * BAR + 'px';
  lanes.appendChild(el);
});

// NEW LEAD one-shots
function ticks(from, to, dim) {
  const offs = [0, 1, 2, 2.25, 3, 4, 5, 6, 7];
  for (let s = from; s < to; s += 8) {
    offs.forEach((o, i) => {
      const b = s + o + 0.3;
      if (b >= to) return;
      const t = document.createElement('div');
      t.className = dim ? 'tick tick-dim' : 'tick';
      t.style.left = barX(b) + 'px';
      t.style.top = 41 * ROW + 'px';
      t.style.width = (i === 2 || i === 5 ? 3 : 2) + 'px';
      lanes.appendChild(t);
    });
  }
}
ticks(1, 33, true);
ticks(33, 57, false);
ticks(113, 121, true);
ticks(121, 145, false);
ticks(145, 153, true);

// BASS row is cut off by the bottom edge
for (let b = 1; b < 153; b += 4) {
  if (b > 56 && b < 113) continue;
  const t = document.createElement('div');
  t.className = b < 33 || b === 113 ? 'purple-tick dim' : 'purple-tick';
  t.style.left = barX(b) + 'px';
  t.style.top = 45 * ROW + 'px';
  lanes.appendChild(t);
}

// ruler
const ruler = document.getElementById('ruler');
for (let b = 1; b <= 153; b += 4) {
  const n = document.createElement('div');
  n.className = 'bar-num';
  n.innerHTML = `<span class="squeeze">${b}</span>`;
  ruler.appendChild(n);
}
[['Auto', 17, 68], ['Auto #2', 25, 98], ['Auto #3', 33, 98], ['Auto #4', 57, 110], ['Auto #5', 113, 98], ['Auto #6', 121, 98]].forEach(m => {
  const el = document.createElement('div');
  el.className = 'marker';
  el.innerHTML = `<span class="squeeze">${m[0]}</span>`;
  el.style.left = barX(m[1]) + 1 + 'px';
  el.style.width = m[2] + 'px';
  ruler.appendChild(el);
});

// overview, x and y are relative to the box
const overview = document.getElementById('overview');
function ov(x0, x1, y, h, colour) {
  const el = document.createElement('div');
  el.className = 'ov';
  el.style.left = x0 - 596 + 'px';
  el.style.width = x1 - x0 + 'px';
  el.style.top = y + 'px';
  el.style.height = h + 'px';
  el.style.background = colour;
  overview.appendChild(el);
}
let seed = 7;
const rnd = () => (seed = (seed * 75 + 74) % 65537) / 65537;

function highBlock(x0, x1) {
  ov(x0, x1, 0, 17, '#86e874');
  for (let y = 2; y < 17; y += 3) {
    for (let x = x0; x < x1;) {
      const w = 10 + rnd() * 70;
      if (rnd() < 0.5) ov(x, Math.min(x + w, x1), y, 1, '#5f8a62');
      x += w;
    }
  }
  ov(x0, x1, 18, 1, '#74c866');
}
function lowBlock(x0, x1) {
  ov(x0, x1, 16, 1, '#7f3f9e');
  ov(x0, x1, 18, 1, '#6a5a9a');
  for (let x = x0; x < x1;) {
    const w = 4 + rnd() * 30;
    ov(x, Math.min(x + w, x1), 20 + Math.floor(rnd() * 4), 2, '#0a8fe8');
    if (rnd() < 0.5) ov(x, Math.min(x + 3, x1), 18, 2, '#8fd070');
    if (rnd() < 0.3) ov(x, Math.min(x + w / 2, x1), 25, 2, '#7f3f9e');
    x += w + rnd() * 8;
  }
  for (let x = x0; x < x1; x += 3) ov(x, Math.min(x + 2, x1), 29, 1, '#b4f070');
  ov(x0, x1, 27, 1, '#2fb8a8');
  ov(x0, x1, 31, 2, '#0a8fe8');
}
ov(684, 800, 9, 2, '#7cd868');
lowBlock(596, 800);
highBlock(800, 1005);
ov(890, 992, 19, 2, '#7f3f9e');
ov(892, 992, 22, 2, '#0a8fe8');
lowBlock(1005, 1312);
highBlock(1312, 2030);
ov(1005, 2030, 32, 3, '#6a5a9a');
lowBlock(2030, 2541);
ov(2030, 2541, 33, 2, '#6a5a9a');
[800, 903, 1005, 1312, 2030, 2133].forEach(x => {
  const f = document.createElement('i');
  f.className = 'ov-flag';
  f.style.left = x - 596 + 'px';
  overview.appendChild(f);
});

// picker clips, notes as [x, y, w, h]
const motif = [[17, 3, 12], [33, 8, 9], [42, 17, 16], [59, 8, 8], [84, 8, 8], [101, 8, 8], [109, 3, 8], [117, 8, 17],
  [151, 3, 12], [168, 8, 8], [176, 17, 17], [193, 8, 8]];
const withH = (list, h) => list.map(n => [n[0], n[1], n[2], h]);
const lead1 = withH(motif.concat([[218, 26, 8], [235, 26, 8], [243, 30, 9], [260, 26, 8],
  [0, 39, 17], [76, 39, 8], [92, 39, 8], [126, 39, 25], [210, 39, 8], [227, 39, 8], [252, 39, 17]]), 4);
const lead4 = withH(motif.concat([[219, 8, 8], [236, 8, 7], [244, 3, 8], [252, 8, 16], [261, 26, 7],
  [0, 39, 17], [76, 39, 7], [93, 39, 7], [126, 39, 8], [135, 39, 16], [210, 39, 8], [227, 39, 8]]), 4);
const pat12 = withH(motif.concat([[219, 26, 8], [236, 26, 8], [244, 30, 9],
  [0, 39, 17], [76, 39, 8], [93, 39, 8], [135, 39, 12], [210, 39, 8], [227, 39, 8], [252, 39, 12]]), 4);

const blocks5 = [[0, 0, 134, 10], [202, 21, 67, 10], [134, 31, 135, 10]];
const blocks2 = [[0, 0, 16], [51, 0, 16], [67, 0, 16], [118, 0, 16], [135, 0, 16], [185, 0, 16], [202, 0, 16], [252, 0, 16],
  [17, 11, 16], [84, 11, 16], [151, 11, 16], [219, 11, 16], [34, 32, 16], [101, 32, 16], [168, 32, 16], [236, 32, 16]];
const blocks6 = [[118, 0, 16], [135, 0, 16], [185, 0, 16], [202, 0, 16], [252, 0, 16], [219, 11, 16], [17, 32, 16], [168, 32, 16], [236, 32, 16]];
const blocks15 = [[67, 1, 33], [134, 1, 33], [235, 1, 33], [168, 11, 32], [34, 32, 32], [101, 32, 32], [202, 32, 32]];

function dashes(x0, x1, y, h) {
  const out = [];
  for (let x = x0; x < x1; x += 8.4) out.push([x, y, Math.min(7, x1 - x), h]);
  return out;
}
function pluck() {
  return [...dashes(202, 268, 3, 3), ...dashes(135, 201, 13, 3), ...dashes(67, 134, 34, 3), ...dashes(0, 66, 39, 3)];
}
function arp() {
  return [...dashes(0, 268, 2, 3), ...dashes(202, 268, 8, 3), ...dashes(135, 200, 14, 3), ...dashes(67, 132, 17, 3),
    ...dashes(202, 268, 17, 3), ...dashes(0, 66, 24, 3), ...dashes(135, 200, 24, 3), ...dashes(67, 132, 37, 3), ...dashes(0, 66, 40, 3)];
}
function pat13() {
  const cell = [[9, 2, 6], [19, 7, 4], [31, 7, 4], [43, 7, 4], [52, 7, 3], [56, 3, 4], [60, 7, 7], [26, 14, 7]];
  const out = [];
  [0, 67, 134].forEach(o => cell.forEach(n => out.push([n[0] + o, n[1], n[2], 4])));
  return out.concat(withH([[0, 38, 8], [38, 38, 4], [47, 38, 4], [63, 38, 12], [105, 38, 4], [114, 38, 4], [135, 38, 8],
    [173, 38, 4], [182, 38, 4], [202, 38, 7], [240, 38, 4], [250, 38, 4], [265, 38, 3], [110, 27, 3], [132, 27, 4],
    [246, 27, 4], [255, 27, 4], [258, 31, 4], [262, 27, 7]], 4));
}

const picks = [
  ['PADS  2', 1, [
    ...[0, 67, 135, 202].map(x => [x, 41, 66, 2]),
    [0, 2, 66, 2], [0, 16, 66, 2], [0, 27, 66, 2], [67, 2, 66, 2], [67, 12, 66, 2], [67, 25, 66, 2],
    [135, 2, 66, 2], [135, 11, 66, 2], [135, 16, 66, 2], [202, 2, 66, 2], [202, 5, 66, 2], [202, 12, 66, 2]]],
  ['NEW LEAD', 1, lead1],
  ['NEW LEAD  #5', 1, blocks5],
  ['NEW LEAD  #4', 1, lead4],
  ['NEW LEAD  #2', 1, withH(blocks2, 10)],
  ['NEW LEAD  #6', 1, withH(blocks6, 10)],
  ['NEW LEAD  #3', 1, [[0, 25, 269, 3]]],
  ['REEZ', 0, [[135, 3, 67, 4], [202, 7, 67, 4], [67, 16, 68, 4], [0, 39, 67, 4]]],
  ['BASS', 1, [[135, 3, 67, 4], [202, 7, 67, 4], [67, 16, 68, 4], [0, 39, 67, 4]]],
  ['REES', 1, [[0, 27, 269, 3]]],
  ['PLUCK', 1, pluck()],
  ['Pattern 12', 0, pat12],
  ['Pattern 13', 0, pat13()],
  ['Pattern 14', 0, [[0, 28, 203, 3]]],
  ['Pattern 15', 0, withH(blocks15, 10)],
  ['Pattern 16', 0, blocks5],
  ['ARP Gitano', 1, arp()],
  ['ATMHOS', 1, [[0, 2, 269, 3], [0, 18, 269, 3], [0, 40, 269, 3]]],
  ['LEAD SAW', 1, lead1]
];
const clipList = document.getElementById('clipList');
picks.forEach(p => {
  const el = document.createElement('div');
  el.className = p[1] ? 'pick' : 'pick pick-off';
  const notes = p[2].map(n =>
    `<i class="note" style="left:${n[0]}px;top:${n[1]}px;width:${n[2]}px;height:${n[3]}px"></i>`).join('');
  const marker = p[0] === 'PLUCK' ? '<i class="pick-marker"></i>' : '';
  el.innerHTML = `<div class="pick-head"><svg><use href="#i-pat"/></svg><span class="pick-name squeeze">${nbsp(p[0])}</span></div>` +
    `<div class="pick-body">${notes}${marker}</div>`;
  clipList.appendChild(el);
});
```
